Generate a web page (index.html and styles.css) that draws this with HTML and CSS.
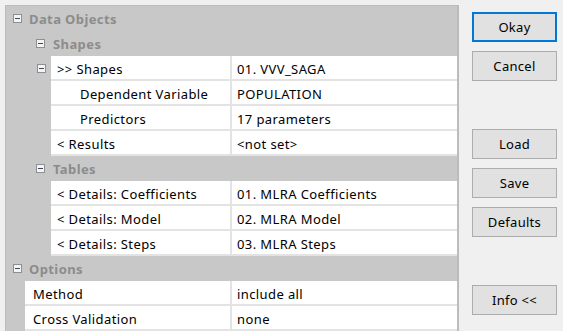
FILE: index.html
```html
<!DOCTYPE html>
<html lang="en">
<head>
    <meta charset="UTF-8">
    <title>Multiple Linear Regression Analysis</title>
    <link rel="stylesheet" href="styles.css">
</head>
<body>
    <div class="dialog">
        <div class="grid">
            <div class="row cat lvl0">
                <span class="toggle"></span><span class="cat-name">Data Objects</span>
            </div>
            <div class="row cat lvl1">
                <span class="toggle"></span><span class="cat-name">Shapes</span>
            </div>
            <div class="row prop lvl2">
                <span class="margin"><span class="toggle"></span></span>
                <span class="name">&gt;&gt; Shapes</span>
                <span class="value">01. VVV_SAGA</span>
            </div>
            <div class="row prop lvl2">
                <span class="margin"></span>
                <span class="name sub">Dependent Variable</span>
                <span class="value">POPULATION</span>
            </div>
            <div class="row prop lvl2">
                <span class="margin"></span>
                <span class="name sub">Predictors</span>
                <span class="value">17 parameters</span>
            </div>
            <div class="row prop lvl2">
                <span class="margin"></span>
                <span class="name">&lt; Results</span>
                <span class="value">&lt;not set&gt;</span>
            </div>
            <div class="row cat lvl1">
                <span class="toggle"></span><span class="cat-name">Tables</span>
            </div>
            <div class="row prop lvl2">
                <span class="margin"></span>
                <span class="name">&lt; Details: Coefficients</span>
                <span class="value">01. MLRA Coefficients</span>
            </div>
            <div class="row prop lvl2">
                <span class="margin"></span>
                <span class="name">&lt; Details: Model</span>
                <span class="value">02. MLRA Model</span>
            </div>
            <div class="row prop lvl2">
                <span class="margin"></span>
                <span class="name">&lt; Details: Steps</span>
                <span class="value">03. MLRA Steps</span>
            </div>
            <div class="row cat lvl0">
                <span class="toggle"></span><span class="cat-name">Options</span>
            </div>
            <div class="row prop lvl1">
                <span class="margin"></span>
                <span class="name">Method</span>
                <span class="value">include all</span>
            </div>
            <div class="row prop lvl1">
                <span class="margin"></span>
                <span class="name">Cross Validation</span>
                <span class="value">none</span>
            </div>
        </div>

        <div class="buttons">
            <button class="btn default">Okay</button>
            <button class="btn">Cancel</button>
            <button class="btn gap">Load</button>
            <button class="btn">Save</button>
            <button class="btn">Defaults</button>
            <button class="btn gap">Info &lt;&lt;</button>
        </div>
    </div>
</body>
</html>
```

FILE: styles.css
```css
body {
    margin: 0;
    background-color: #f0f0f0;
    font-family: "Noto Sans", "Segoe UI", sans-serif;
    font-size: 13px;
    letter-spacing: 0.4px;
    color: #000;
    overflow: hidden;
}

.dialog {
    display: flex;
    align-items: flex-start;
    height: 331px;
}

.grid {
    margin: 5px 0 0 5px;
    width: 451px;
    height: 340px;
    background-color: #c8c8c8;
    border: 1px solid #bcbcbc;
    border-right-width: 2px;
    border-bottom: none;
}

.row {
    display: flex;
    align-items: stretch;
    height: 25px;
    box-sizing: border-box;
}

.cat {
    align-items: center;
}

.cat-name {
    font-weight: bold;
    color: #8c8c8c;
    padding-top: 1px;
}

.cat.lvl0 .toggle {
    margin: 0 7px 0 7px;
}

.cat.lvl1 .toggle {
    margin: 0 8px 0 30px;
}

.toggle {
    display: inline-block;
    position: relative;
    width: 7px;
    height: 7px;
    border: 1px solid #8f8f8f;
    background-color: #f4f4f4;
    flex-shrink: 0;
}

.toggle::after {
    content: "";
    position: absolute;
    left: 1px;
    top: 3px;
    width: 5px;
    height: 1px;
    background-color: #3c4a60;
}

.margin {
    display: flex;
    align-items: center;
    flex-shrink: 0;
}

.lvl1 .margin {
    width: 19px;
}

.lvl2 .margin {
    width: 45px;
}

.lvl2 .margin .toggle {
    margin-left: 31px;
}

.name,
.value {
    display: flex;
    align-items: center;
    background-color: #fff;
    border-bottom: 2px solid #e3e3e3;
    white-space: nowrap;
    overflow: hidden;
    padding-top: 2px;
}

.name {
    border-right: 2px solid #e3e3e3;
    padding-left: 6px;
}

.lvl1 .name {
    width: 207px;
    padding-left: 8px;
    box-sizing: border-box;
}

.lvl2 .name {
    width: 181px;
    box-sizing: border-box;
}

.name.sub {
    padding-left: 29px;
}

.value {
    flex: 1;
    padding-left: 5px;
}

.buttons {
    display: flex;
    flex-direction: column;
    margin: 12px 0 0 13px;
}

.btn {
    width: 85px;
    height: 30px;
    margin-bottom: 9px;
    background-color: #e1e1e1;
    border: 1px solid #adadad;
    font-family: "Noto Sans", "Segoe UI", sans-serif;
    font-size: 13px;
    letter-spacing: 0.3px;
    color: #000;
    padding: 0;
}

.btn.default {
    border: 2px solid #0078d7;
}

.btn.gap {
    margin-top: 39px;
}
```
